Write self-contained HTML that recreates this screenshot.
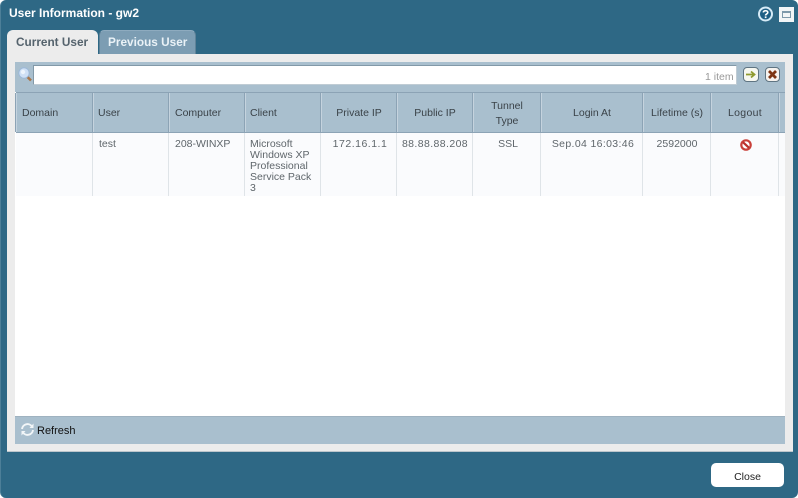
<!DOCTYPE html>
<html><head><meta charset="utf-8"><style>
html,body{margin:0;padding:0}
body{width:798px;height:498px;overflow:hidden;background:#fff;position:relative;font-family:"Liberation Sans",sans-serif;font-size:10.5px;color:#444}
div,svg{position:absolute;box-sizing:border-box}
.t{white-space:nowrap;line-height:11px}
.h{color:#3a4248;top:108px}
.c{text-align:center}
.v{position:absolute;top:93px;width:1px;height:39px;background:#8ca3b5;box-shadow:1px 0 0 #c5d3de}
.l{position:absolute;top:133px;width:1px;height:63px;background:#dfe4e8}
.d{top:139px;color:#5f666b}
</style></head><body>
<div style="left:0;top:0;width:798px;height:498px;background:#2e6885;border-radius:6px;border-left:1px solid #4d7f98"></div>
<div class="t" style="left:9px;top:8px;color:#fff;font-weight:bold;font-size:12px;">User Information - gw2</div>
<svg style="left:757px;top:6px" width="17" height="17" viewBox="0 0 17 17"><circle cx="8.5" cy="8" r="6.5" fill="#1f5f85" stroke="#d6ebf7" stroke-width="2"/><path d="M6.3 6.4C6.5 4.2 10.8 4.2 10.8 6.5C10.8 8 8.6 7.9 8.6 9.5" fill="none" stroke="#fff" stroke-width="1.6"/><rect x="7.8" y="10.4" width="1.7" height="1.7" fill="#fff"/></svg>
<div style="left:779px;top:7px;width:15px;height:15px;background:#f2f5f7"></div>
<div style="left:782px;top:11px;width:9px;height:7px;border:1px solid #7d99ab;border-top:2px solid #7d99ab"></div>

<div style="left:7px;top:54px;width:786px;height:398px;background:#ececec;border-bottom:1px solid #bcc6cc"></div>
<div style="left:7px;top:30px;width:91px;height:25px;background:#ececec;border-radius:6px 6px 0 0"></div>
<div class="t" style="left:16px;top:36px;color:#55636d;font-weight:bold;font-size:11.8px;line-height:12px">Current User</div>
<div style="left:99px;top:30px;width:97px;height:24px;background:#7c9db3;border-radius:5px 5px 0 0;border-top:1px solid #8eabbf;border-right:1px solid #5f8399;border-left:1px solid #5f8399"></div>
<div class="t" style="left:108px;top:36px;color:#eaf2f7;font-weight:bold;font-size:11.8px;line-height:12px">Previous User</div>

<div style="left:15px;top:62px;width:770px;height:382px;background:#fff"></div>
<div style="left:15px;top:62px;width:770px;height:30px;background:#a9bfce"></div>
<svg style="left:17px;top:66px" width="17" height="17" viewBox="0 0 17 17"><path d="M10 10.5L14 14.5" stroke="#a8764a" stroke-width="2.6"/><circle cx="7" cy="7" r="5.2" fill="#cfe0f5" stroke="#9cb8d8" stroke-width="1"/><circle cx="6" cy="6" r="2.2" fill="#edf4fc"/></svg>
<div style="left:33px;top:65px;width:704px;height:20px;background:#fff;border:1px solid #8299a8;border-bottom-color:#c0ccd4;border-right-color:#c0ccd4"></div>
<div class="t" style="left:705px;top:72px;color:#999;">1 item</div>
<div style="left:743px;top:67px;width:16px;height:15px;background:#f6f7f0;border:1px solid #5f7482;border-radius:4px"></div>
<svg style="left:745px;top:69px" width="12" height="11" viewBox="0 0 12 11"><path d="M1 5.5H9M6 2.5L9.5 5.5L6 8.5" fill="none" stroke="#8f9a2e" stroke-width="1.8"/></svg>
<div style="left:765px;top:67px;width:15px;height:15px;background:#f6f2ee;border:1px solid #5f7482;border-radius:4px"></div>
<svg style="left:767px;top:69px" width="11" height="11" viewBox="0 0 11 11"><path d="M2 2L9 9M9 2L2 9" stroke="#7d3413" stroke-width="2.8"/></svg>

<div style="left:16px;top:92px;width:769px;height:41px;background:#a9bfce;border-top:1px solid #8ca3b5;border-bottom:1px solid #8ca3b5"></div>
<div class="v" style="left:15px"></div><div class="v" style="left:92px"></div><div class="v" style="left:168px"></div><div class="v" style="left:244px"></div><div class="v" style="left:320px"></div><div class="v" style="left:396px"></div><div class="v" style="left:472px"></div><div class="v" style="left:540px"></div><div class="v" style="left:642px"></div><div class="v" style="left:710px"></div><div class="v" style="left:778px"></div>
<div class="t h" style="left:22px">Domain</div>
<div class="t h" style="left:98px">User</div>
<div class="t h" style="left:175px">Computer</div>
<div class="t h" style="left:250px">Client</div>
<div class="t h c" style="left:321px;width:76px">Private IP</div>
<div class="t h c" style="left:397px;width:76px">Public IP</div>
<div class="t c" style="left:473px;width:68px;top:99px;color:#3a4248;line-height:15px">Tunnel<br>Type</div>
<div class="t h c" style="left:541px;width:102px">Login At</div>
<div class="t h c" style="left:643px;width:68px">Lifetime (s)</div>
<div class="t h c" style="left:711px;width:68px;letter-spacing:.3px">Logout</div>

<div style="left:16px;top:133px;width:769px;height:63px;background:#fafbfd"></div>
<div class="l" style="left:92px"></div><div class="l" style="left:168px"></div><div class="l" style="left:244px"></div><div class="l" style="left:320px"></div><div class="l" style="left:396px"></div><div class="l" style="left:472px"></div><div class="l" style="left:540px"></div><div class="l" style="left:642px"></div><div class="l" style="left:710px"></div><div class="l" style="left:778px"></div>
<div class="t d" style="left:99px">test</div>
<div class="t d" style="left:175px">208-WINXP</div>
<div class="t d" style="left:250px;line-height:11px">Microsoft<br>Windows XP<br>Professional<br>Service Pack<br>3</div>
<div class="t d c" style="left:322px;width:76px;letter-spacing:.5px">172.16.1.1</div>
<div class="t d c" style="left:397px;width:76px;letter-spacing:.4px">88.88.88.208</div>
<div class="t d c" style="left:474px;width:68px">SSL</div>
<div class="t d c" style="left:542px;width:102px;letter-spacing:.35px">Sep.04 16:03:46</div>
<div class="t d c" style="left:643px;width:68px">2592000</div>
<svg style="left:739px;top:138px" width="14" height="14" viewBox="0 0 14 14"><circle cx="7" cy="7" r="4.7" fill="#fff" stroke="#c9403a" stroke-width="2.2"/><path d="M4 4.2L10 9.8" stroke="#b9302c" stroke-width="2.2"/></svg>

<div style="left:15px;top:416px;width:770px;height:28px;background:#a9bfce;border-top:1px solid #9fb2c0"></div>
<svg style="left:20px;top:422px" width="15" height="15" viewBox="0 0 15 15"><path d="M2 7A5.5 5.5 0 0 1 12 4.5M13 8A5.5 5.5 0 0 1 3 10.5" fill="none" stroke="#f2f6f8" stroke-width="1.9"/><path d="M13.5 1.5V6H9.5ZM1.5 13.5V9H5.5Z" fill="#f2f6f8"/></svg>
<div class="t" style="left:37px;top:426px;color:#111;font-size:11px">Refresh</div>

<div style="left:711px;top:463px;width:73px;height:24px;background:#fff;border-radius:5px"></div>
<div class="t c" style="left:711px;top:472px;width:73px;color:#222">Close</div>
</body></html>
